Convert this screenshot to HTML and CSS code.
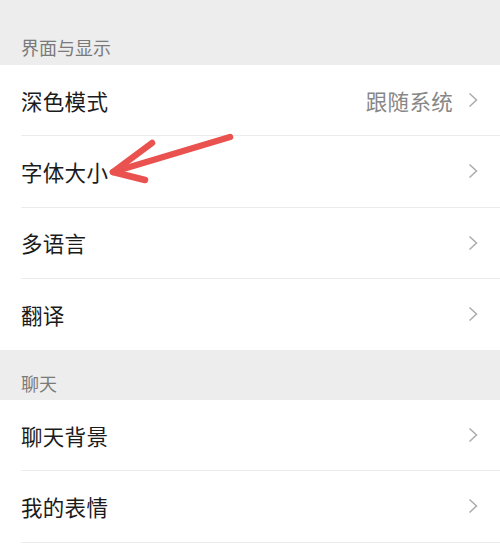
FILE: index.html
```html
<!DOCTYPE html>
<html lang="zh">
<head>
<meta charset="utf-8">
<link rel="stylesheet" href="styles.css">
</head>
<body>
<div class="page">
  <div class="section-label first">界面与显示</div>
  <div class="group">
    <div class="row"><span class="title">深色模式</span><span class="value">跟随系统</span><svg class="chev" viewBox="0 0 10 16"><path d="M1.5 1.5 L8.5 8 L1.5 14.5"/></svg></div>
    <div class="row"><span class="title">字体大小</span><svg class="chev" viewBox="0 0 10 16"><path d="M1.5 1.5 L8.5 8 L1.5 14.5"/></svg></div>
    <div class="row"><span class="title">多语言</span><svg class="chev" viewBox="0 0 10 16"><path d="M1.5 1.5 L8.5 8 L1.5 14.5"/></svg></div>
    <div class="row last"><span class="title">翻译</span><svg class="chev" viewBox="0 0 10 16"><path d="M1.5 1.5 L8.5 8 L1.5 14.5"/></svg></div>
  </div>
  <div class="section-label">聊天</div>
  <div class="group tail">
    <div class="row"><span class="title">聊天背景</span><svg class="chev" viewBox="0 0 10 16"><path d="M1.5 1.5 L8.5 8 L1.5 14.5"/></svg></div>
    <div class="row"><span class="title">我的表情</span><svg class="chev" viewBox="0 0 10 16"><path d="M1.5 1.5 L8.5 8 L1.5 14.5"/></svg></div>
  </div>
  <svg class="arrow" viewBox="0 0 500 548" width="500" height="548">
    <path d="M230 137 L113 172" />
    <path d="M152 143 L113 172 L145 180" />
  </svg>
</div>
</body>
</html>
```
FILE: styles.css
```css
html, body {
  margin: 0;
  padding: 0;
}
body {
  font-family: "Noto Sans CJK SC", "Noto Sans", sans-serif;
  background: #ffffff;
}
.page {
  position: relative;
  width: 500px;
  height: 548px;
  overflow: hidden;
  background: #ededed;
}
.section-label {
  height: 50px;
  box-sizing: border-box;
  padding: 21px 0 0 21px;
  font-size: 18px;
  line-height: 24px;
  color: #7a7a7a;
}
.section-label.first {
  height: 65px;
  padding-top: 35px;
}
.group {
  background: #ffffff;
}
.group.tail {
  padding-bottom: 20px;
}
.row {
  margin-left: 21px;
  padding-right: 22px;
  display: flex;
  align-items: center;
  border-bottom: 1px solid #ececec;
  box-sizing: border-box;
  height: 71.25px;
}
.row.last {
  border-bottom: none;
}
.title {
  flex: 1;
  font-size: 21.5px;
  color: #1b1b1b;
  letter-spacing: 0.3px;
}
.value {
  font-size: 21.5px;
  color: #878787;
  margin-right: 15px;
  letter-spacing: 0.3px;
}
.chev {
  width: 10px;
  height: 16px;
  fill: none;
  stroke: #ababab;
  stroke-width: 1.5;
}
.arrow {
  position: absolute;
  left: 0;
  top: 0;
  fill: none;
  stroke: #e9524f;
  stroke-width: 6.5;
  stroke-linecap: round;
  stroke-linejoin: round;
}
```
